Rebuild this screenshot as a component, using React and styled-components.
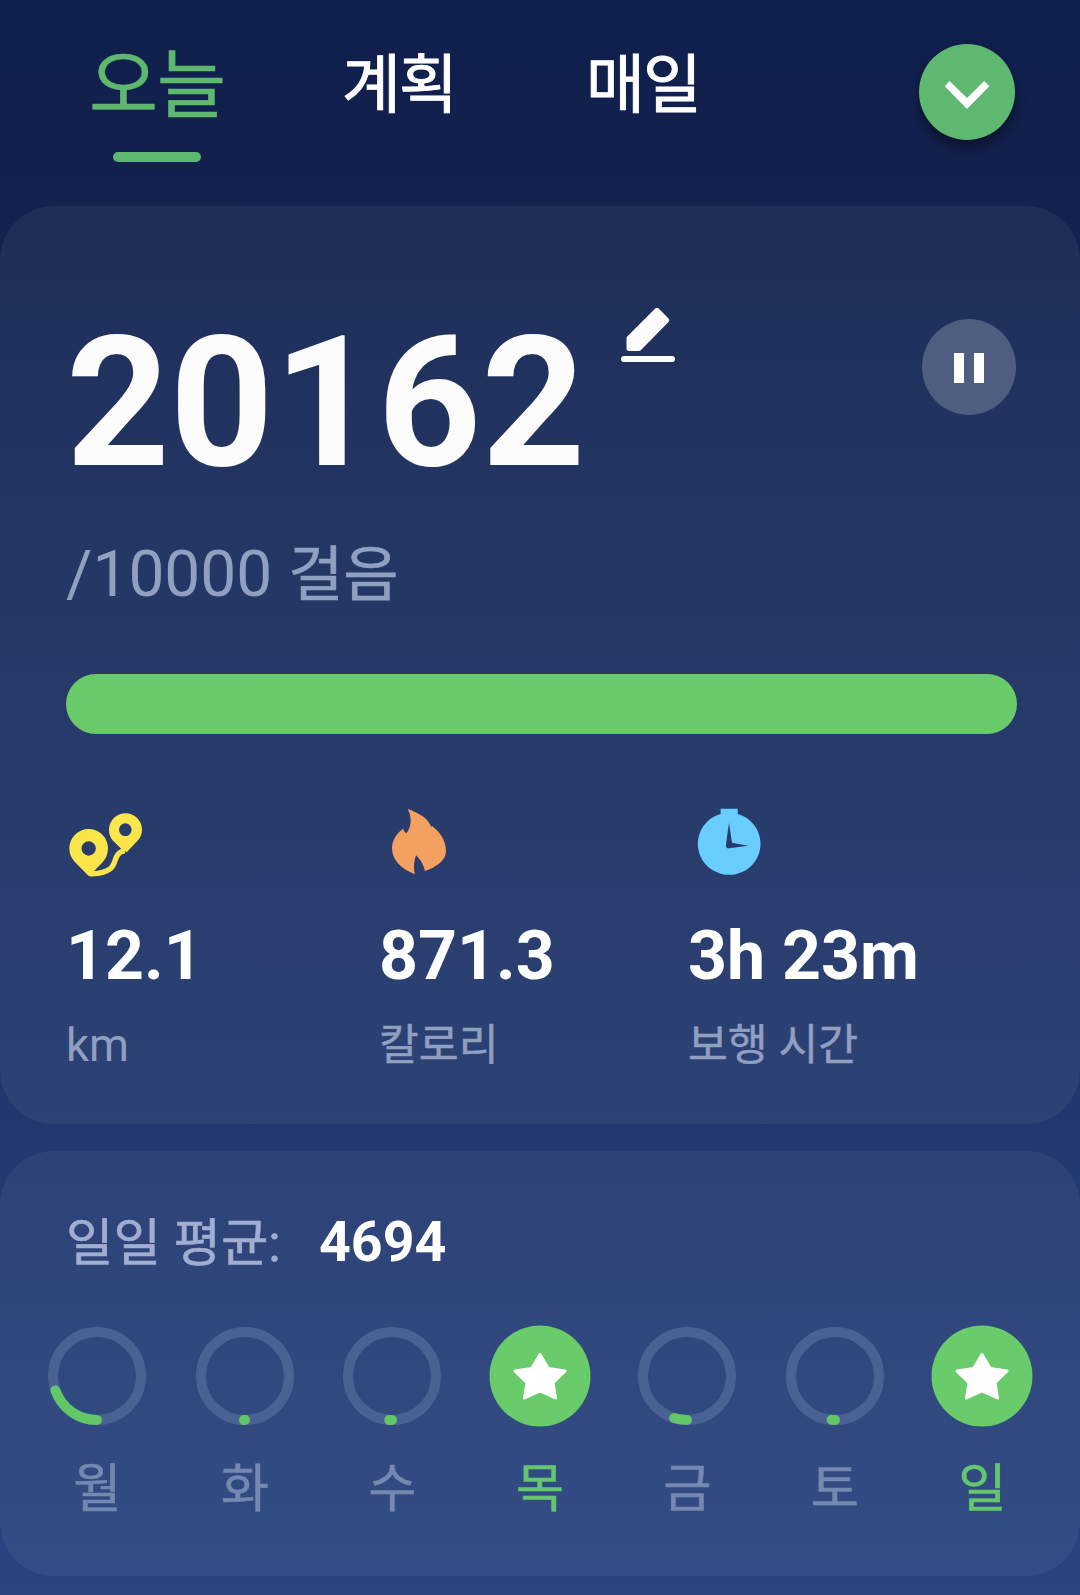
import React from "react";
import styled, { createGlobalStyle } from "styled-components";

const GlobalStyle = createGlobalStyle`
  *, *::before, *::after { box-sizing: border-box; }
  body {
    margin: 0;
    background: #0f1f4b;
    font-family: Roboto, "Noto Sans CJK KR", sans-serif;
  }
  svg { display: block; flex: none; }
`;

const Screen = styled.main`
  width: 1080px;
  height: 1595px;
  overflow: hidden;
  background: linear-gradient(180deg, #0f1f4b 0%, #13214f 12.5%, #192b5c 33%, #22386f 71%, #294480 100%);
`;

const Header = styled.header`
  display: flex;
  align-items: flex-start;
  justify-content: space-between;
  height: 206px;
  padding: 44px 65px 0 88px;
`;

const Tabs = styled.nav`
  display: flex;
  align-items: flex-start;
`;

const Tab = styled.button`
  display: flex;
  flex-direction: column;
  align-items: center;
  width: ${(p) => p.$width}px;
  margin-right: ${(p) => p.$gap || 0}px;
  padding: 4px 0 0;
  border: 0;
  background: none;
  color: ${(p) => (p.$active ? "#5fb870" : "#ffffff")};
  font-family: inherit;
  font-weight: 400;
  font-size: ${(p) => (p.$active ? 75 : 64)}px;
  line-height: 76px;
  letter-spacing: ${(p) => (p.$active ? -1 : -2)}px;
  -webkit-text-stroke: ${(p) => (p.$active ? 0.5 : 0.9)}px currentColor;
  white-space: nowrap;
`;

const TabMark = styled.span`
  width: 88px;
  height: 10px;
  margin-top: 28px;
  border-radius: 5px;
  background: #5fb870;
`;

const ExpandButton = styled.button`
  display: flex;
  align-items: center;
  justify-content: center;
  width: 96px;
  height: 96px;
  padding: 6px 0 0;
  border: 0;
  border-radius: 50%;
  background: #5fb870;
  box-shadow: 0 8px 14px rgba(0, 0, 0, 0.42);
`;

const Card = styled.section`
  height: ${(p) => p.$height}px;
  margin-bottom: 27px;
  padding: ${(p) => p.$pad};
  border-radius: 54px;
  background: rgba(240, 255, 240, 0.056);
`;

const StepsRow = styled.div`
  display: flex;
  align-items: flex-start;
`;

const Steps = styled.div`
  width: 555px;
  color: #fcfcfc;
  font-weight: 700;
  font-size: 181px;
  line-height: 195px;
`;

const EditButton = styled.button`
  display: block;
  margin: 0 auto 0 0;
  padding: 0;
  border: 0;
  background: none;
`;

const PauseButton = styled.button`
  display: flex;
  align-items: center;
  justify-content: center;
  gap: 10px;
  width: 94px;
  height: 96px;
  margin: 13px 1px 0 0;
  padding: 2px 0 0;
  border: 0;
  border-radius: 50%;
  background: #4f5d80;
`;

const PauseBar = styled.span`
  width: 10px;
  height: 30px;
  background: #ffffff;
`;

const Goal = styled.div`
  height: 80px;
  margin-top: 34px;
  color: #91a0c0;
  font-size: 64px;
  line-height: 80px;
  white-space: pre;
`;

const GoalUnit = styled.span`
  font-size: 60px;
  -webkit-text-stroke: 0.6px currentColor;
`;

const Progress = styled.div`
  height: 60px;
  margin-top: 59px;
  border-radius: 30px;
  background: #69cb69;
`;

const Metrics = styled.div`
  display: grid;
  grid-template-columns: 313px 309px 1fr;
  margin-top: 74px;
`;

const Metric = styled.div`
  display: flex;
  flex-direction: column;
`;

const MetricIcon = styled.div`
  height: 80px;
  padding-left: ${(p) => p.$inset}px;
`;

const MetricValue = styled.div`
  margin-top: 28px;
  color: #ffffff;
  font-weight: 700;
  font-size: 68px;
  line-height: 80px;
  white-space: nowrap;
`;

const MetricLabel = styled.div`
  margin-top: 20px;
  color: #919fc0;
  font-size: ${(p) => (p.$latin ? 45.5 : 43.3)}px;
  line-height: 60px;
  -webkit-text-stroke: ${(p) => (p.$latin ? 0 : 0.5)}px currentColor;
`;

const Average = styled.div`
  display: flex;
  align-items: baseline;
  padding-left: 20px;
  line-height: 70px;
`;

const AverageLabel = styled.span`
  width: 253px;
  color: #a1aed2;
  font-size: 51.5px;
  white-space: nowrap;
  -webkit-text-stroke: 0.6px currentColor;
`;

const AverageValue = styled.span`
  color: #ffffff;
  font-weight: 700;
  font-size: 55.5px;
`;

const Week = styled.div`
  display: flex;
  justify-content: space-between;
  margin-top: 46px;
`;

const Day = styled.div`
  display: flex;
  flex-direction: column;
  align-items: center;
  width: 102px;
`;

const DayLabel = styled.span`
  margin-top: 27px;
  padding-left: 1px;
  color: ${(p) => (p.$done ? "#65c570" : "#7488b0")};
  font-size: 52.5px;
  line-height: 70px;
  -webkit-text-stroke: 0.5px currentColor;
`;

function Chevron() {
  return (
    <svg width="46" height="30" viewBox="944.5 80 46 30">
      <path fill="#fff" d="M945.3 86.3 950 81l17.5 17 17.3-17 5 5.3L967.5 109z" />
    </svg>
  );
}

function EditIcon() {
  return (
    <svg width="54" height="56" viewBox="621 306 54 56">
      <path
        d="M657 310.3 666.7 320.300 639 348.6 629 348.6 629 338.3z"
        fill="#fcfcfc"
        stroke="#fcfcfc"
        strokeWidth="5"
        strokeLinejoin="round"
      />
      <path d="M624 359h48" stroke="#fcfcfc" strokeWidth="6" strokeLinecap="round" />
    </svg>
  );
}

function RouteIcon() {
  return (
    <svg width="80" height="72" viewBox="78 84 240 216">
      <g fill="#fae54a" fillRule="evenodd">
        <path d="M146 288 104 245C93 233 88 221 88 205a58 58 0 0 1 116 0c0 17-6 31-16 42l-26 26zM146 184a21 21 0 1 0 0 43 21 21 0 0 0 0-43z" />
        <path d="M244 207 219 182C211 173 207 162 207 149a49.500 49.500 0 0 1 99 0c0 13-5 24-12 32l-34 36zM256 130a18.500 18.500 0 1 0 0 38 18.500 18.500 0 0 0 0-38z" />
      </g>
      <path
        d="M148 281c26 1 48-3 63-15 19-16 11-42 33-51l10-3"
        fill="none"
        stroke="#fae54a"
        strokeWidth="16"
        strokeLinejoin="round"
      />
    </svg>
  );
}

function FlameIcon() {
  return (
    <svg width="56" height="67" viewBox="1054 84 168 201">
      <path
        fill="#f3a061"
        d="M1104 87c29 10 61 26 71 54l2-3c28 20 42 49 42 75 0 29-30 49-63 60-6-23-14-34-27-47-6 16-8 36-4 57-38-16-68-41-68-78 0-25 14-45 34-59 1 6 4 11 9 14 15-18 18-47 4-73z"
      />
    </svg>
  );
}

function ClockIcon() {
  return (
    <svg width="64" height="68" viewBox="172 84 192 204">
      <path
        fill="#69cdff"
        fillRule="evenodd"
        d="M243 86h51v16a94 93 0 1 1-51 0zM268 128l-9 65c-1 8 2 13 10 12l57-8-49-9z"
      />
    </svg>
  );
}

function Ring({ angle }) {
  const rad = (angle * Math.PI) / 180;
  const x = 51 - 44 * Math.sin(rad);
  const y = 51 + 44 * Math.cos(rad);
  return (
    <svg width="102" height="102" viewBox="0 0 102 102">
      <circle cx="51" cy="51" r="44" fill="none" stroke="#486293" strokeWidth="10" />
      <path
        d={`M51 95A44 44 0 0 1 ${x} ${y}`}
        fill="none"
        stroke="#62c767"
        strokeWidth="10"
        strokeLinecap="round"
      />
    </svg>
  );
}

function StarBadge() {
  return (
    <svg width="102" height="102" viewBox="0 0 102 102">
      <circle cx="51" cy="51" r="50.500" fill="#69cb69" />
      <path
        d="M51 29.500 59.300 43.500 76 46 64 57.800 66.500 73 51 65.800 35.500 73 38 57.800 26 46 42.700 43.500z"
        fill="#fff"
        stroke="#fff"
        strokeWidth="3"
        strokeLinejoin="round"
      />
    </svg>
  );
}

const days = [
  { name: "월", angle: 70.9 },
  { name: "화", angle: 1.3 },
  { name: "수", angle: 3.5 },
  { name: "목", done: true },
  { name: "금", angle: 17 },
  { name: "토", angle: 4.4 },
  { name: "일", done: true },
];

const metrics = [
  { icon: <RouteIcon />, inset: 0, value: "12.1", label: "km", latin: true },
  { icon: <FlameIcon />, inset: 12, value: "871.3", label: "칼로리" },
  { icon: <ClockIcon />, inset: 9.3, value: "3h 23m", label: "보행 시간" },
];

export default function App() {
  return (
    <Screen>
      <GlobalStyle />
      <Header>
        <Tabs>
          <Tab $active $width={138} $gap={116}>
            오늘
            <TabMark />
          </Tab>
          <Tab $width={114} $gap={130}>계획</Tab>
          <Tab $width={114}>매일</Tab>
        </Tabs>
        <ExpandButton aria-label="펼치기">
          <Chevron />
        </ExpandButton>
      </Header>

      <Card $height={918} $pad="100px 63px 0 66px">
        <StepsRow>
          <Steps>20162</Steps>
          <EditButton aria-label="수정">
            <EditIcon />
          </EditButton>
          <PauseButton aria-label="일시정지">
            <PauseBar />
            <PauseBar />
          </PauseButton>
        </StepsRow>
        <Goal>
          /10000 <GoalUnit>걸음</GoalUnit>
        </Goal>
        <Progress />
        <Metrics>
          {metrics.map((m) => (
            <Metric key={m.label}>
              <MetricIcon $inset={m.inset}>{m.icon}</MetricIcon>
              <MetricValue>{m.value}</MetricValue>
              <MetricLabel $latin={m.latin}>{m.label}</MetricLabel>
            </Metric>
          ))}
        </Metrics>
      </Card>

      <Card $height={425} $pad="57px 47px 0 46px">
        <Average>
          <AverageLabel>일일 평균:</AverageLabel>
          <AverageValue>4694</AverageValue>
        </Average>
        <Week>
          {days.map((d) => (
            <Day key={d.name}>
              {d.done ? <StarBadge /> : <Ring angle={d.angle} />}
              <DayLabel $done={d.done}>{d.name}</DayLabel>
            </Day>
          ))}
        </Week>
      </Card>
    </Screen>
  );
}
